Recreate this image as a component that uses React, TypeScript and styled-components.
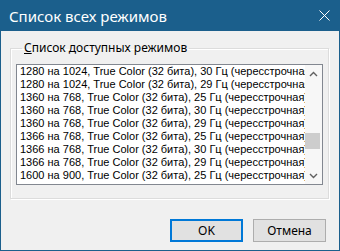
import React, {FC} from 'react';
import styled, {createGlobalStyle} from 'styled-components';

const GlobalStyle = createGlobalStyle`
  html, body {
    margin: 0;
    padding: 0;
    background: #f0f0f0;
  }
`;

const Window = styled.div`
  width: 340px;
  height: 251px;
  box-sizing: border-box;
  border: 1px solid #1b5f8c;
  border-top: none;
  background: #f0f0f0;
  display: flex;
  flex-direction: column;
  font-family: "Liberation Sans", Arial, sans-serif;
`;

const TitleBar = styled.div`
  height: 31px;
  margin: 0 -1px;
  padding: 0 0 0 9px;
  background: #1b5f8c;
  color: #fff;
  display: flex;
  align-items: center;
  justify-content: space-between;
  font-family: "Noto Sans", sans-serif;
  font-size: 15px;
`;

const CloseBox = styled.div`
  width: 32px;
  height: 31px;
  display: flex;
  align-items: center;
  justify-content: center;
`;

const Body = styled.div`
  flex: 1;
  display: flex;
  flex-direction: column;
  padding-top: 10px;
`;

const Group = styled.fieldset`
  margin: 0 10px 0 9px;
  padding: 9px 5px 13px 5px;
  border: 1px solid #dcdcdc;
  box-shadow: 1px 1px 0 #fff, inset 1px 1px 0 #fff;
  min-width: 0;
`;

const Legend = styled.legend`
  margin-left: 6px;
  padding: 0 2px;
  font-family: "Noto Sans", sans-serif;
  font-size: 12px;
  line-height: 14px;
  color: #000;

  u {
    text-decoration: underline;
  }
`;

const ListBox = styled.div`
  height: 119px;
  border: 1px solid #828790;
  background: #fff;
  display: flex;
`;

const Rows = styled.div`
  flex: 1;
  min-width: 0;
  overflow: hidden;
  padding-left: 3px;
`;

const Row = styled.div`
  height: 13px;
  line-height: 13px;
  font-size: 11px;
  color: #000;
  white-space: nowrap;
`;

const ScrollBar = styled.div`
  width: 17px;
  display: flex;
  flex-direction: column;
  background: #f7f7f7;
`;

const Arrow = styled.div`
  height: 17px;
  display: flex;
  align-items: center;
  justify-content: center;
`;

const Track = styled.div`
  flex: 1;
  padding-top: 51px;
`;

const Thumb = styled.div`
  height: 16px;
  margin: 0 2px 0 0;
  background: #cdcdcd;
`;

const Buttons = styled.div`
  display: flex;
  justify-content: flex-end;
  gap: 10px;
  margin-top: 20px;
  padding-right: 13px;
`;

const Button = styled.button<{$default?: boolean}>`
  width: 73px;
  height: 23px;
  box-sizing: border-box;
  padding: 0;
  background: #e1e1e1;
  border: ${p => (p.$default ? '2px solid #0078d7' : '1px solid #adadad')};
  font-family: "Noto Sans", sans-serif;
  font-size: 12px;
  color: #000;
`;

const modes = [
  ['1280 на 1024', '30'],
  ['1280 на 1024', '29'],
  ['1360 на 768', '25'],
  ['1360 на 768', '30'],
  ['1360 на 768', '29'],
  ['1366 на 768', '25'],
  ['1366 на 768', '30'],
  ['1366 на 768', '29'],
  ['1600 на 900', '25'],
];

const Chevron: FC<{up?: boolean}> = ({up}) => (
  <svg width="9" height="6" viewBox="0 0 9 6">
    <path
      d={up ? 'M1 5 L4.5 1.5 L8 5' : 'M1 1 L4.5 4.5 L8 1'}
      fill="none"
      stroke="#606060"
      strokeWidth="1.4"
    />
  </svg>
);

const App: FC = () => (
  <>
    <GlobalStyle />
    <Window>
      <TitleBar>
        Список всех режимов
        <CloseBox>
          <svg width="11" height="11" viewBox="0 0 11 11">
            <path d="M0.5 0.5 L10.5 10.5 M10.5 0.5 L0.5 10.5" stroke="#fff" strokeWidth="1" />
          </svg>
        </CloseBox>
      </TitleBar>
      <Body>
        <Group>
          <Legend>
            <u>С</u>писок доступных режимов
          </Legend>
          <ListBox>
            <Rows>
              {modes.map(([res, hz], i) => (
                <Row key={i}>
                  {res}, True Color (32 бита), {hz} Гц (чересстрочная)
                </Row>
              ))}
            </Rows>
            <ScrollBar>
              <Arrow>
                <Chevron up />
              </Arrow>
              <Track>
                <Thumb />
              </Track>
              <Arrow>
                <Chevron />
              </Arrow>
            </ScrollBar>
          </ListBox>
        </Group>
        <Buttons>
          <Button $default>OK</Button>
          <Button>Отмена</Button>
        </Buttons>
      </Body>
    </Window>
  </>
);

export default App;
